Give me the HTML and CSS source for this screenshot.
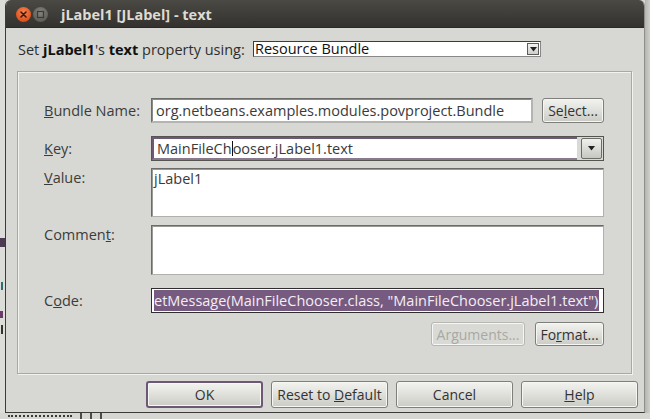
FILE: index.html
```html
<!DOCTYPE html>
<html>
<head>
<meta charset="utf-8">
<link rel="stylesheet" href="styles.css">
</head>
<body>
<div class="desk">
  <div class="behind">
    <div class="behind-sel"></div>
    <div class="behind-mark m1"></div>
    <div class="behind-mark m2"></div>
    <div class="behind-mark m3"></div>
  </div>
  <div class="window">
    <div class="titlebar">
      <span class="wbtn close"><svg width="15" height="15" viewBox="0 0 15 15"><path d="M5 5 L10 10 M10 5 L5 10" stroke="#3a1a0a" stroke-width="1.6" stroke-linecap="round"/></svg></span>
      <span class="wbtn mini"><svg width="15" height="15" viewBox="0 0 15 15"><rect x="4.5" y="4.5" width="6" height="6" fill="none" stroke="#3a3a36" stroke-width="1.2"/></svg></span>
      <span class="title">jLabel1 [JLabel] - text</span>
    </div>
    <div class="content">
      <div class="using">
        <span class="using-label">Set <b>jLabel1</b>'s <b>text</b> property using:</span>
        <div class="combo small">
          <span class="combo-text">Resource Bundle</span>
          <span class="arrow small-arrow"><svg width="7" height="5" viewBox="0 0 7 5"><path d="M0 0 H7 L3.5 4.5Z" fill="#222"/></svg></span>
        </div>
      </div>
      <div class="panel">
        <div class="row r-bundle">
          <label class="lbl"><u>B</u>undle Name:</label>
          <div class="line">
            <div class="field grow">org.netbeans.examples.modules.povproject.Bundle</div>
            <button class="btn select">Se<u>l</u>ect...</button>
          </div>
        </div>
        <div class="row r-key">
          <label class="lbl"><u>K</u>ey:</label>
          <div class="combo key">
            <span class="key-text">MainFileCh<span class="caret"></span>ooser.jLabel1.text</span>
            <span class="arrow key-arrow"><svg width="7" height="5" viewBox="0 0 7 5"><path d="M0 0 H7 L3.5 4.5Z" fill="#222"/></svg></span>
          </div>
        </div>
        <div class="row r-value">
          <label class="lbl top"><u>V</u>alue:</label>
          <div class="area value">jLabel1</div>
        </div>
        <div class="row r-comment">
          <label class="lbl top">Commen<u>t</u>:</label>
          <div class="area comment"></div>
        </div>
        <div class="row r-code">
          <label class="lbl">C<u>o</u>de:</label>
          <div class="field code"><span class="sel">etMessage(MainFileChooser.class, "MainFileChooser.jLabel1.text")</span></div>
        </div>
        <div class="btnrow">
          <button class="btn args" disabled>Ar<u>g</u>uments...</button>
          <button class="btn fmt">Fo<u>r</u>mat...</button>
        </div>
      </div>
      <div class="footer">
        <button class="btn big ok">OK</button>
        <button class="btn big">Reset to <u>D</u>efault</button>
        <button class="btn big">Cancel</button>
        <button class="btn big"><u>H</u>elp</button>
      </div>
    </div>
  </div>
  <div class="shadow"></div>
</div>
<div class="under">
  <span class="under-txt"></span>
  <span class="under-bar"></span>
  <span class="under-bar"></span>
  <span class="under-bar"></span>
</div>
</body>
</html>
```
FILE: styles.css
```css
* { box-sizing: border-box; }
html, body { margin: 0; padding: 0; }
body {
  width: 650px;
  height: 419px;
  overflow: hidden;
  background: #d4d4d0;
  font-family: "Open Sans", "DejaVu Sans", sans-serif;
  font-size: 14.5px;
  color: #3c3c3c;
}
.desk {
  display: flex;
  height: 413px;
}
.behind {
  width: 5px;
  position: relative;
  background: #dcdcd8;
}
.behind-sel {
  position: absolute;
  left: 0; top: 238px;
  width: 5px; height: 9px;
  background: #4d3a52;
}
.behind-mark {
  position: absolute;
  width: 2px;
  background: #2e6e70;
}
.behind-mark.m1 { left: 1px; top: 282px; height: 8px; }
.behind-mark.m2 { left: 0; top: 311px; height: 7px; width: 3px; background: #6a3a6a; }
.behind-mark.m3 { left: 1px; top: 325px; height: 9px; background: #333; }
.window {
  width: 640px;
  height: 413px;
  background: #d7d8d3;
  border-left: 1px solid #3c3b37;
  border-bottom: 1px solid #3c3b37;
  border-right: 1px solid #8e8e8a;
  border-radius: 6px 6px 0 0;
  display: flex;
  flex-direction: column;
  overflow: hidden;
}
.shadow {
  width: 5px;
  background: linear-gradient(to right, #b4b4b0, #cfcfcb);
}
.titlebar {
  height: 28px;
  flex: none;
  background: linear-gradient(to bottom, #4a4944, #3c3b37 60%, #33322e);
  border-bottom: 1px solid #2a2925;
  display: flex;
  align-items: center;
  padding-left: 10px;
}
.wbtn {
  width: 15px; height: 15px;
  border-radius: 50%;
  display: flex;
  margin-top: 2px;
}
.wbtn.close {
  background: radial-gradient(circle at 50% 35%, #f7844f, #e0521d 70%, #b8400f);
}
.wbtn.mini {
  margin-left: 2px;
  background: radial-gradient(circle at 50% 35%, #85847d, #5d5c57 75%, #4a4945);
}
.title {
  margin-left: 13px;
  margin-top: 1px;
  color: #dfdbd2;
  font-weight: bold;
  font-size: 14.5px;
}
.content {
  flex: 1;
  display: flex;
  flex-direction: column;
}
.using {
  display: flex;
  align-items: center;
  margin-top: 13px;
  padding-left: 12px;
  height: 16px;
}
.using-label {
  width: 235px;
  color: #2e2e2e;
  white-space: nowrap;
}
.using-label b { color: #111; }
.combo.small {
  width: 288px;
  height: 16px;
  background: #fff;
  border: 1px solid #3c3c3c;
  border-right-color: #888;
  border-bottom-color: #888;
  display: flex;
  align-items: center;
  justify-content: space-between;
  padding-left: 1px;
  line-height: 14px;
  color: #111;
}
.small-arrow {
  width: 12px; height: 12px;
  margin-right: 1px;
  border: 1px solid #5c5c58;
  background: linear-gradient(#f2f2ef, #cfcfca);
  display: flex; align-items: center; justify-content: center;
}
.panel {
  margin: 14px 12px 0 11px;
  height: 303px;
  border: 1px solid #a8a9a4;
  box-shadow: inset 1px 1px 0 #f2f2ef, 1px 1px 0 #f2f2ef;
  padding: 26px 27px 0 26px;
  display: flex;
  flex-direction: column;
}
.row {
  display: flex;
  align-items: center;
}
.lbl {
  width: 107px;
  flex: none;
  color: #3c3c3c;
}
.lbl.top { align-self: flex-start; margin-top: 0; }
.line { flex: 1; display: flex; gap: 9px; }
.field {
  height: 25px;
  background: #fff;
  border: 2px solid #6b6b67;
  border-right-color: #b4b4b0;
  border-bottom-color: #b4b4b0;
  border-top-width: 1px;
  border-left-width: 1px;
  box-shadow: inset 1px 1px 0 #8a8a86;
  display: flex;
  align-items: center;
  padding-left: 4px;
  white-space: nowrap;
  overflow: hidden;
  color: #3a3a3a;
}
.grow { flex: 1; min-width: 0; }
.r-key { margin-top: 13px; }
.combo.key {
  flex: 1;
  height: 25px;
  display: flex;
  align-items: stretch;
  border: 1px solid #55544f;
  background: #d9d9d5;
}
.key-text {
  flex: 1;
  background: #fff;
  border-top: 2px solid #6e5a78;
  border-bottom: 2px solid #8a7a90;
  border-left: 2px solid #6e5a78;
  display: flex;
  align-items: center;
  padding-left: 3px;
  margin-right: 4px;
  color: #3a3a3a;
}
.caret {
  display: inline-block;
  width: 1px;
  height: 15px;
  background: #111;
}
.key-arrow {
  width: 21px;
  margin: 1px 1px 1px 0;
  border: 1px solid #6b6b67;
  border-radius: 2px;
  background: linear-gradient(#f0f0ed, #c6c7c1);
  display: flex; align-items: center; justify-content: center;
}
.r-value { margin-top: 7px; }
.area {
  flex: 1;
  background: #fff;
  border: 1px solid #6b6b67;
  border-right-color: #b0b0ac;
  border-bottom-color: #b0b0ac;
  box-shadow: inset 1px 1px 0 #9a9a96;
  padding: 0 2px;
  line-height: 19px;
  color: #3a3a3a;
}
.area.value { height: 49px; }
.r-comment { margin-top: 8px; }
.area.comment { height: 50px; }
.r-code { margin-top: 13px; }
.field.code {
  flex: 1;
  min-width: 0;
  padding-left: 2px;
  border-color: #2e2e2e;
  border-width: 1px;
  box-shadow: none;
}
.sel {
  background: #775a80;
  color: #f2eef4;
  padding-right: 1px;
  line-height: 21px;
}
.btnrow {
  display: flex;
  justify-content: flex-end;
  gap: 10px;
  margin-top: 9px;
}
.btn {
  font-family: inherit;
  font-size: 14px;
  color: #333;
  background: linear-gradient(#f2f2ef, #dcdcd7 60%, #cacbc5);
  border: 1px solid #7e7f7a;
  border-radius: 3px;
  height: 24px;
  padding: 0 3px;
  margin: 0;
  box-shadow: inset 0 0 0 1px #f6f6f4;
  white-space: nowrap;
}
.btn.select { width: 62px; height: 25px; padding: 0; }
.btn.args {
  width: 94px;
  color: #a8a9a4;
  border-color: #b6b7b2;
  background: #d9dad5;
}
.btn.fmt { width: 69px; padding: 0; }
.footer {
  display: flex;
  gap: 8px;
  justify-content: flex-end;
  padding-right: 6px;
  margin-top: 7px;
}
.btn.big { width: 117px; height: 27px; }
.btn.ok {
  border: 2px solid #6c5874;
}
.under {
  height: 6px;
  background: #d6d6d2;
  display: flex;
  align-items: flex-start;
  gap: 8px;
  padding-left: 8px;
  overflow: hidden;
}
.under-txt {
  width: 64px;
  height: 5px;
  border-top: 2px dotted #3a3a3a;
  margin-top: 2px;
}
.under-bar {
  width: 2px;
  height: 6px;
  background: #4a4a46;
}
```
